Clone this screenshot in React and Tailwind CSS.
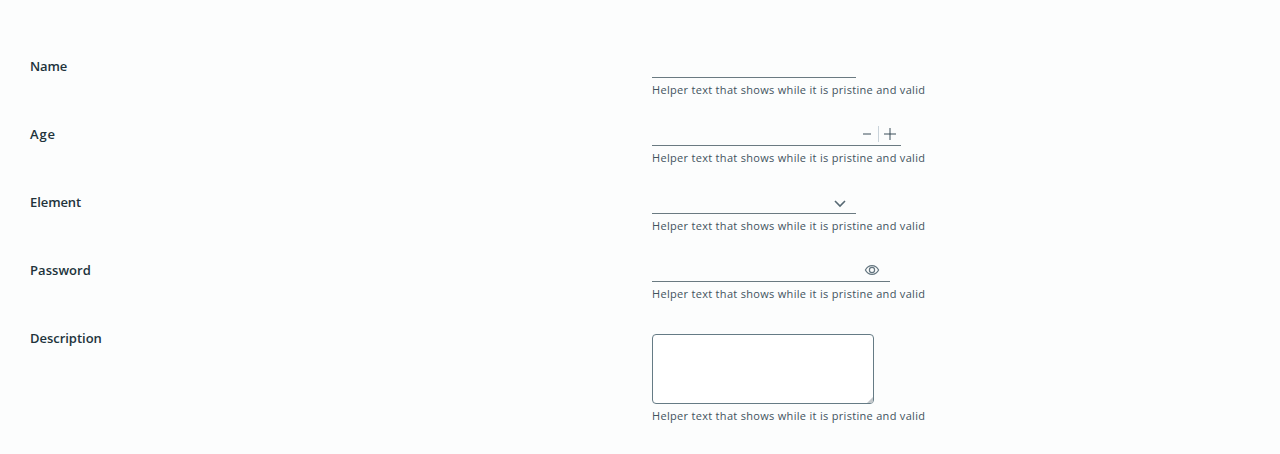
const HELPER = 'Helper text that shows while it is pristine and valid';

function Row({ label, tracking, height = 'h-[68px]', children }) {
  return (
    <div className={`flex ${height}`}>
      <label className={`w-[622px] text-[13px] leading-6 font-semibold text-[#21333b] ${tracking}`}>{label}</label>
      <div className="flex flex-col items-start">
        {children}
        <span className="mt-1 text-[11px] leading-4 tracking-[0.305px] whitespace-nowrap text-[#42535d]">{HELPER}</span>
      </div>
    </div>
  );
}

const field = 'flex h-6 items-center border-b border-[#6a7a81]';
const input = 'h-full min-w-0 flex-1 bg-transparent outline-none';

export default function App() {
  return (
    <main className="h-[454px] overflow-hidden bg-[#fcfdfd] pt-[54px] pl-[30px] font-['Open_Sans',sans-serif]">
      <Row label="Name" tracking="tracking-[-0.15px]">
        <div className={`${field} w-[204px]`}>
          <input className={input} />
        </div>
      </Row>
      <Row label="Age" tracking="tracking-[0.8px]">
        <div className={`${field} w-[249px]`}>
          <input className={input} />
          <svg className="h-6 w-[43px] shrink-0" viewBox="0 0 43 24" fill="none">
            <path d="M5 12h8" stroke="#9ba5ab" strokeWidth="2" />
            <path d="M20.5 4v16" stroke="#c9d3da" />
            <path d="M26 12h12M32 6v12" stroke="#9ba5ab" strokeWidth="2" />
            <path d="M31 12h2" stroke="#66757e" strokeWidth="2" />
          </svg>
        </div>
      </Row>
      <Row label="Element" tracking="tracking-[-0.08px]">
        <div className={`${field} w-[204px]`}>
          <input className={input} />
          <svg className="h-6 w-6 shrink-0" viewBox="0 0 24 24" fill="none">
            <path d="M3 11l5 5 5-5" stroke="#566973" strokeWidth="1.6" />
          </svg>
        </div>
      </Row>
      <Row label="Password" tracking="tracking-[0.06px]">
        <div className={`${field} w-[238px]`}>
          <input className={input} type="password" />
          <svg className="h-6 w-[26px] shrink-0" viewBox="0 0 26 24" fill="none" stroke="#647680">
            <path d="M1.4 12C2.8 9.2 5.2 7.6 8 7.6s5.2 1.6 6.6 4.4c-1.4 2.8-3.8 4.4-6.6 4.4S2.8 14.8 1.4 12Z" strokeWidth="1.2" />
            <circle cx="8" cy="12" r="2.6" strokeWidth="1.2" />
          </svg>
        </div>
      </Row>
      <Row label="Description" tracking="tracking-[-0.03px]" height="h-[110px]">
        <div className="relative mt-2">
          <textarea className="block h-[70px] w-[222px] resize-none rounded-[4px] border border-[#657b85] bg-white outline-none" />
          <svg className="pointer-events-none absolute right-px bottom-px h-[6px] w-[6px]" viewBox="0 0 6 6">
            <path d="M6 0v5L5 6H0Z" fill="#c3c8cb" />
          </svg>
        </div>
      </Row>
    </main>
  );
}
